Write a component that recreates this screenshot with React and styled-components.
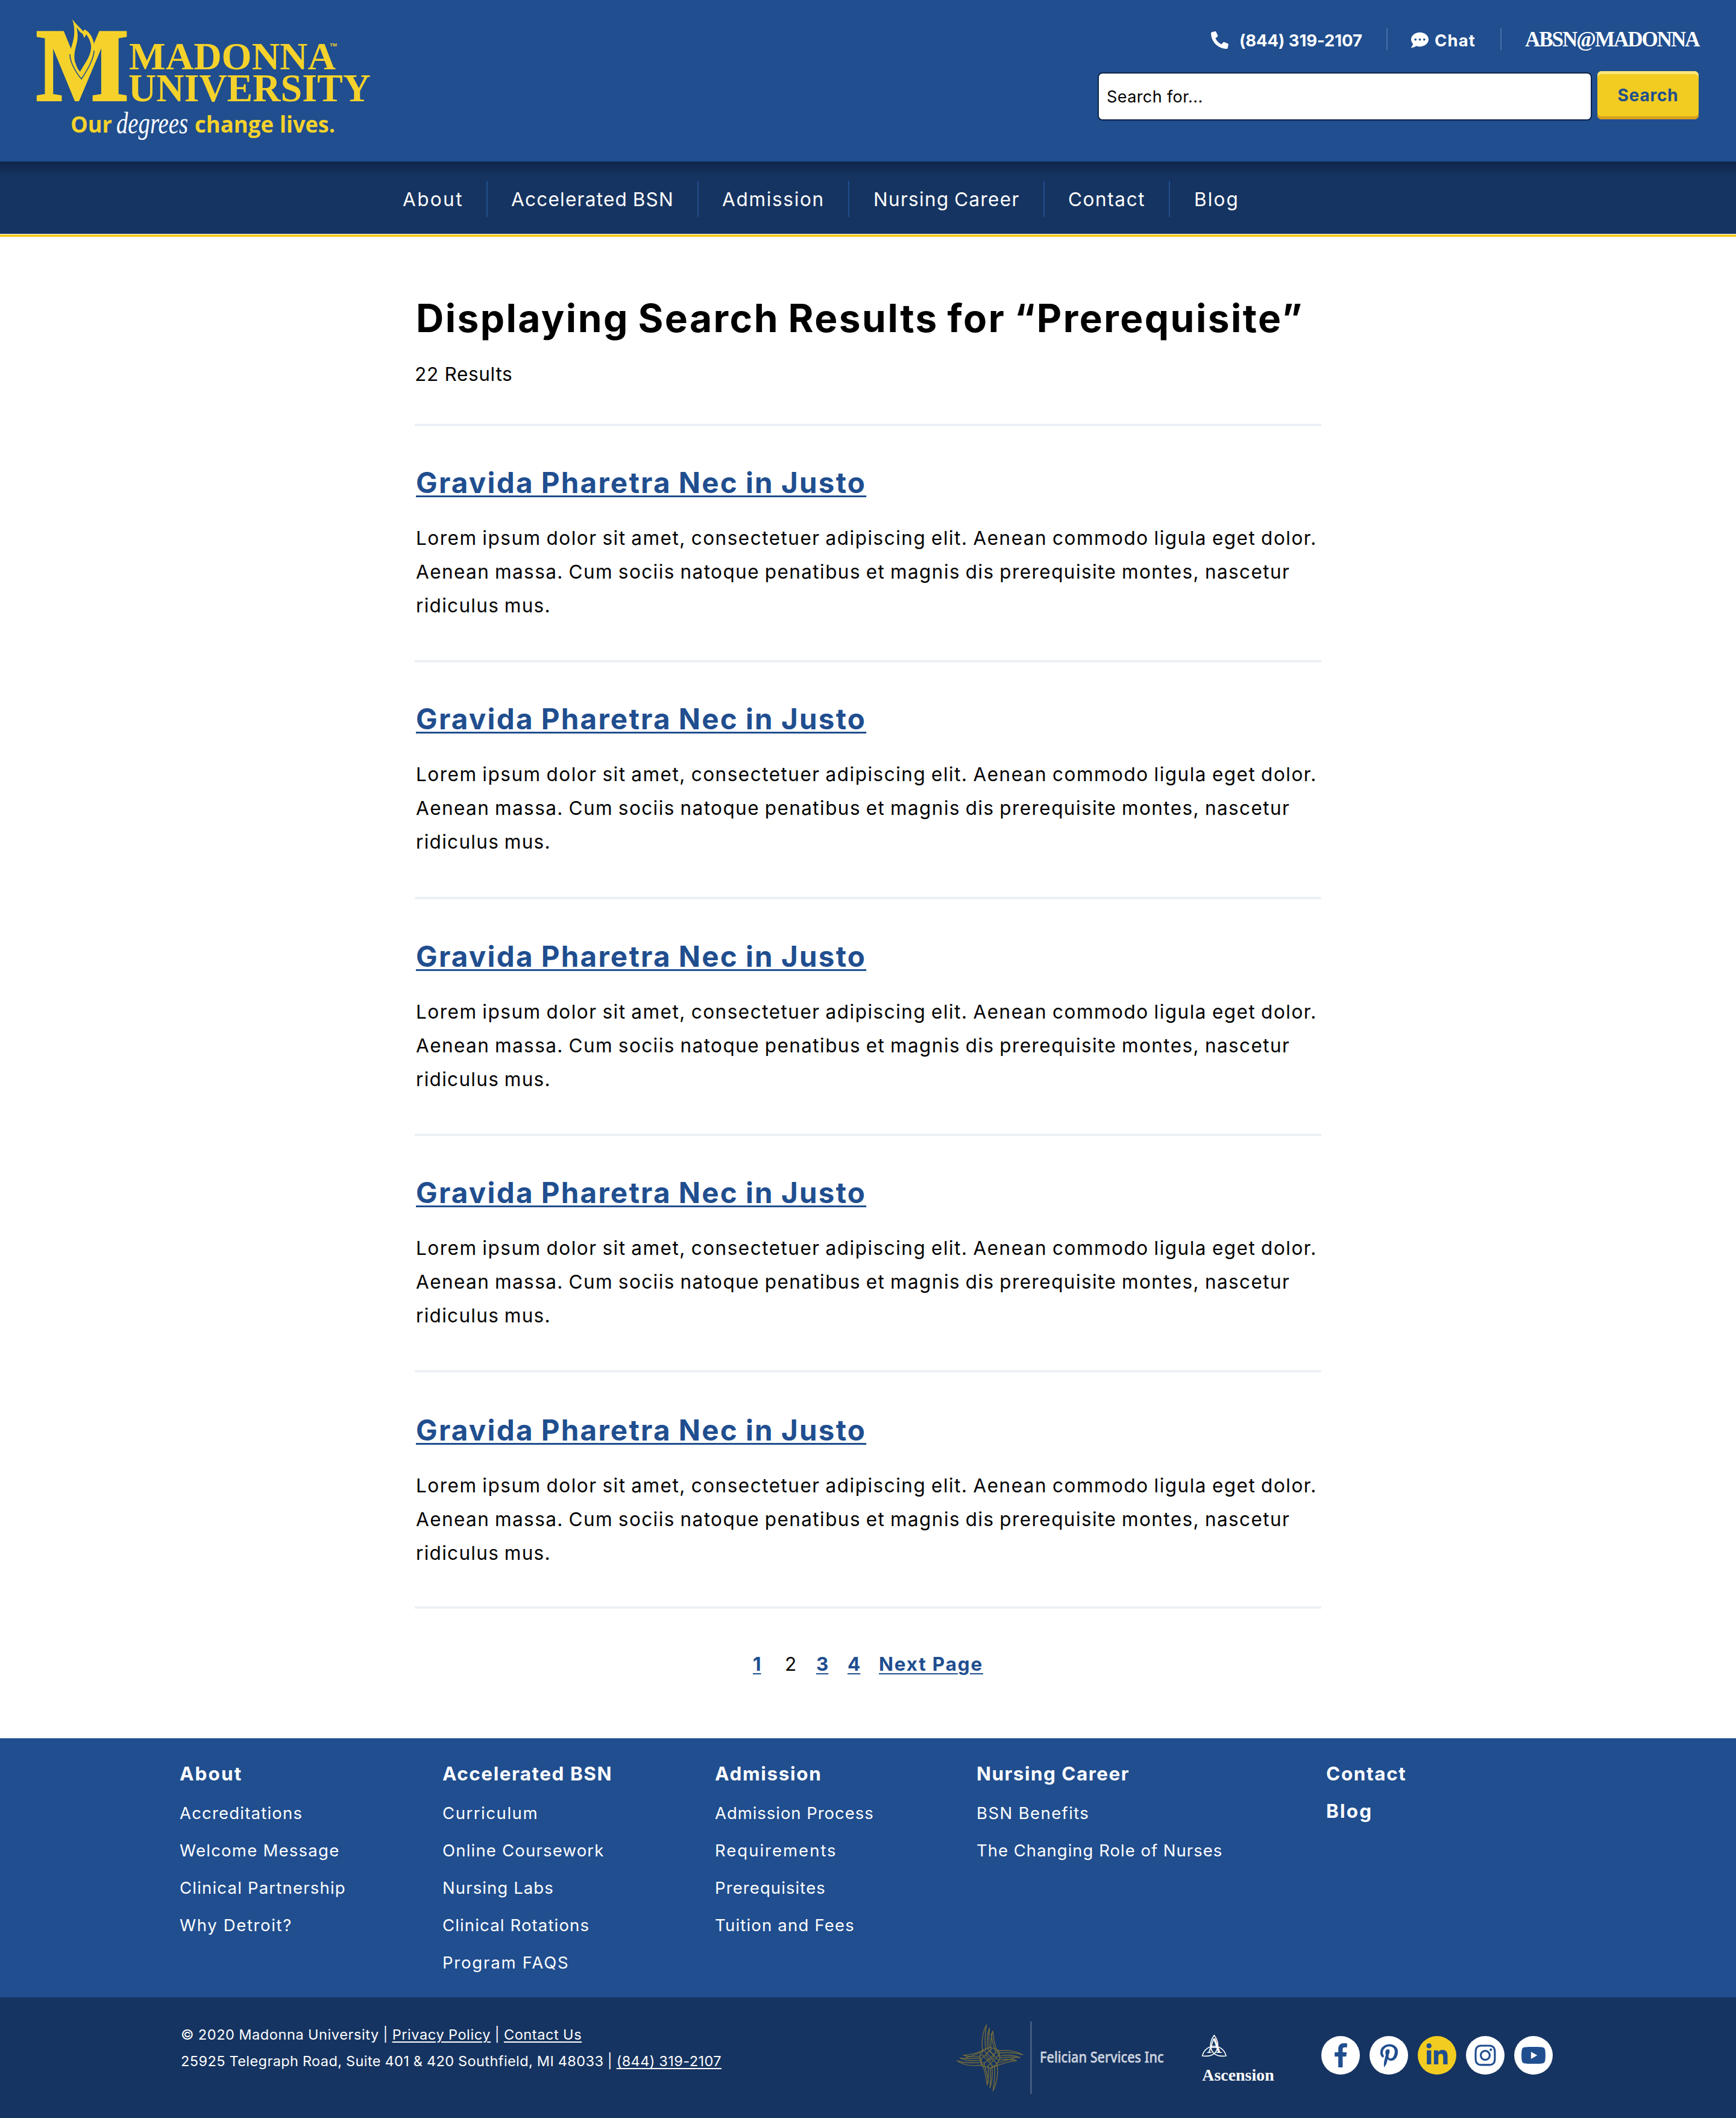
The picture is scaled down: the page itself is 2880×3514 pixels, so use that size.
import React from "react";
import styled, { createGlobalStyle, css } from "styled-components";
import {
  FaCommentDots,
  FaInstagram,
  FaLinkedinIn,
  FaPhoneAlt,
  FaPinterestP,
  FaYoutube,
} from "react-icons/fa";

const color = {
  blue: "#204e8f",
  navy: "#163461",
  shadow: "#0d2549",
  yellow: "#f2cc20",
  logo: "#f5d22b",
  rule: "#edf1f6",
};

const GlobalStyle = createGlobalStyle`
  *, *::before, *::after { box-sizing: border-box; }
  body {
    margin: 0;
    background: #fff;
    color: #000;
    font-family: Inter, "Open Sans", sans-serif;
    font-kerning: normal;
  }
  a { color: inherit; text-decoration: none; }
  h1, h2, p, ul { margin: 0; padding: 0; }
  svg { flex-shrink: 0; overflow: visible; }
`;

const Page = styled.div`
  width: 2880px;
  display: flex;
  flex-direction: column;
`;

/* Header */

const Header = styled.header`
  height: 268px;
  background: ${color.blue};
  display: flex;
  justify-content: space-between;
  align-items: flex-start;
  padding: 28px 62px 0 50px;
`;

const HeaderTools = styled.div`
  width: 997px;
  padding-top: 19px;
`;

const Utility = styled.div`
  height: 36px;
  display: flex;
  justify-content: flex-end;
  align-items: center;
  gap: 39px;
  color: #fff;
`;

const UtilityLink = styled.a`
  width: ${(p) => p.$width}px;
  display: flex;
  align-items: center;
  gap: ${(p) => p.$gap || 0}px;
  padding-top: 3px;
  font-size: 27.5px;
  font-weight: 700;
  white-space: nowrap;
  letter-spacing: ${(p) => p.$track || 0}px;
`;

const Wordmark = styled(UtilityLink)`
  padding-top: 2px;
  font-family: "Liberation Serif", serif;
  font-size: 35px;
  font-weight: 700;
`;

const UtilityRule = styled.span`
  width: 2px;
  height: 36px;
  background: #4a6fa8;
`;

const SearchForm = styled.form`
  display: flex;
  align-items: flex-start;
  justify-content: space-between;
  margin-top: 35px;
`;

const SearchInput = styled.input`
  width: 820px;
  height: 80px;
  margin: 2px 0 0;
  padding: 0 0 0 13px;
  border: 2px solid ${color.shadow};
  border-radius: 8px;
  background: #fff;
  font-family: inherit;
  font-size: 27px;
  letter-spacing: 0.4px;
  color: #000;
  &::placeholder { color: #000; opacity: 1; }
`;

const SearchButton = styled.button`
  width: 168px;
  height: 80px;
  padding: 0;
  border: 0;
  border-radius: 7px;
  background: ${color.yellow};
  box-shadow: inset 0 5px 0 #fbe67c, inset 0 -5px 0 #d8a11b;
  font-family: inherit;
  font-size: 28px;
  font-weight: 700;
  letter-spacing: 0.8px;
  color: ${color.blue};
`;

/* Navigation */

const Nav = styled.nav`
  height: 120px;
  padding: 32px 0 0 667px;
  display: flex;
  align-items: flex-start;
  background: linear-gradient(${color.shadow} 0, ${color.navy} 24px);
`;

const NavLink = styled.a`
  width: ${(p) => p.$width}px;
  height: 60px;
  padding-left: ${(p) => p.$inset}px;
  border-right: ${(p) => (p.$last ? "0" : `2px solid ${color.blue}`)};
  color: #fff;
  font-size: 31.5px;
  line-height: 61px;
  white-space: nowrap;
  word-spacing: -1.5px;
  letter-spacing: ${(p) => p.$track}px;
`;

const Stripe = styled.div`
  height: 5px;
  border-top: 1px solid #fff;
  background: ${color.yellow};
`;

/* Results */

const Main = styled.main`
  width: 1504px;
  margin: 0 auto;
  padding: 97px 0 103px;
`;

const Heading = styled.h1`
  padding-left: 2px;
  font-size: 64px;
  line-height: 76px;
  font-weight: 700;
  white-space: nowrap;
  word-spacing: -3px;
  letter-spacing: 2.45px;
`;

const Count = styled.p`
  margin: 35px 0 62px;
  font-size: 31.5px;
  line-height: 40px;
  letter-spacing: 0.7px;
`;

const Result = styled.article`
  height: ${(p) => p.$height}px;
  padding: ${(p) => p.$top}px 0 0 2px;
  border-top: 4px solid ${color.rule};
`;

const ResultTitle = styled.h2`
  font-size: 47.5px;
  line-height: 60px;
  font-weight: 700;
  letter-spacing: 2.25px;
  word-spacing: -1.5px;
  color: ${color.blue};
  a {
    text-decoration: underline;
    text-decoration-thickness: 3px;
    text-underline-offset: 4px;
  }
`;

const Excerpt = styled.p`
  margin-top: 34px;
  font-size: 31.5px;
  line-height: 56px;
  word-spacing: -1.5px;
`;

const Line = styled.span`
  display: block;
  white-space: nowrap;
  letter-spacing: ${(p) => p.$track}px;
`;

const Pagination = styled.nav`
  height: 116px;
  padding: 72px 0 0 561px;
  border-top: 4px solid ${color.rule};
  display: flex;
  font-size: 31.5px;
  line-height: 40px;
`;

const PageLink = styled.a`
  width: ${(p) => p.$width}px;
  white-space: nowrap;
  letter-spacing: ${(p) => p.$track || 0}px;
  ${(p) =>
    !p.$current &&
    css`
      font-weight: 700;
      color: ${color.blue};
      text-decoration: underline;
      text-decoration-thickness: 2px;
      text-underline-offset: 4px;
    `}
`;

/* Footer */

const FooterNav = styled.div`
  height: 430px;
  padding: 39px 0 0 298px;
  display: grid;
  grid-template-columns: 436px 452px 434px 580px 1fr;
  background: ${color.blue};
  color: #fff;
`;

const FooterHeading = styled.a`
  display: block;
  margin-bottom: ${(p) => (p.$solo ? 22 : 14)}px;
  font-size: 31.5px;
  line-height: 40px;
  font-weight: 700;
  letter-spacing: ${(p) => p.$track}px;
`;

const FooterLink = styled.a`
  display: block;
  font-size: 27.5px;
  line-height: 62px;
  white-space: nowrap;
  letter-spacing: ${(p) => p.$track}px;
`;

const Bottom = styled.div`
  height: 200px;
  padding-left: 300px;
  display: flex;
  align-items: flex-start;
  background: ${color.navy};
  color: #fff;
`;

const Legal = styled.div`
  width: 1280px;
  padding-top: 40px;
  font-size: 23.5px;
  line-height: 44px;
  word-spacing: -0.5px;
  a {
    text-decoration: underline;
    text-decoration-thickness: 2px;
    text-underline-offset: 3px;
  }
`;

const Felician = styled.svg`
  margin: 36px 55px 0 0;
`;

const Ascension = styled.svg`
  margin: 58px 74px 0 0;
`;

const Social = styled.div`
  display: flex;
  gap: 16px;
  padding-top: 64px;
`;

const SocialLink = styled.a`
  width: 64px;
  height: 64px;
  border-radius: 50%;
  display: flex;
  align-items: center;
  justify-content: center;
  background: ${(p) => (p.$active ? color.yellow : "#fff")};
  color: ${color.blue};
`;

const Logo = () => (
  <svg width="570" height="212" viewBox="50 28 570 212" fill={color.logo}>
    <g fontFamily="'Liberation Serif', serif" fontWeight="700">
      <text x="60" y="166" fontSize="171" textLength="153" lengthAdjust="spacingAndGlyphs" stroke={color.logo} strokeWidth="4">M</text>
      <text x="214" y="115" fontSize="64" textLength="343" lengthAdjust="spacingAndGlyphs">MADONNA</text>
      <text x="213" y="168" fontSize="65" textLength="402" lengthAdjust="spacingAndGlyphs">UNIVERSITY</text>
    </g>
    <text x="547" y="77" fontSize="8" fontWeight="700" fontFamily="'Liberation Sans', sans-serif" textLength="12" lengthAdjust="spacingAndGlyphs">TM</text>
    <path d="M120 32C125 48 124 61 119 76C115 88 117 98 121 108C125 118 129 124 135 132C141 122 147 113 151 103C156 92 158 80 155 69C152 58 146 51 140 49L138 52C132 45 126 40 120 32Z" />
    <path
      fill="none"
      stroke={color.blue}
      strokeWidth="1.6"
      d="M116 90C116 98 118 103 121 109C125 118 129 124 135 131C141 122 147 113 151 103C154 96 156 90 156 84"
    />
    <path
      fill={color.blue}
      d="M127 45C130 58 129 67 126 77C123 88 122 98 126 107C128 113 130 116 133 119C136 113 140 107 143 102C148 94 152 84 151 75C150 68 147 62 143 57L140 63L137 56C133 54 130 50 127 45Z"
    />
    <g fontFamily="'Open Sans', sans-serif" fontWeight="700" fontSize="38">
      <text x="117" y="220" textLength="69" lengthAdjust="spacingAndGlyphs">Our</text>
      <text x="323" y="220" textLength="131" lengthAdjust="spacingAndGlyphs">change</text>
      <text x="464" y="220" textLength="92" lengthAdjust="spacingAndGlyphs">lives.</text>
    </g>
    <text
      x="193"
      y="221"
      fill="#fff"
      fontFamily="'Liberation Serif', serif"
      fontStyle="italic"
      fontSize="50"
      textLength="119"
      lengthAdjust="spacingAndGlyphs"
    >
      degrees
    </text>
  </svg>
);

const FelicianLogo = () => (
  <Felician width="355" height="130" viewBox="30 30 1065 390">
    <g fill="none" stroke="#94802f" strokeWidth="4.2" opacity="0.74">
      <path d="M200 57C180 95 174 140 180 190M200 57C192 100 190 140 196 186M215 73C200 110 202 150 206 180M215 73C210 120 211 150 214 178M231 87C222 120 220 150 222 180M231 87C234 130 240 165 262 215M222 100C228 140 236 170 248 200" />
      <path d="M232 388C252 345 260 300 252 255M232 388C240 340 244 300 238 258M217 374C230 330 230 290 226 262M217 374C220 330 220 300 218 270M203 360C212 320 210 290 208 262M203 360C198 310 188 270 170 230M210 345C204 305 196 275 186 245" />
      <path d="M52 237C90 262 130 266 180 258M52 237C95 250 135 250 182 244M66 223C100 238 140 240 176 232M66 223C110 228 140 228 172 222M82 209C115 220 150 218 176 212M82 209C130 210 170 190 215 170M95 222C135 212 160 200 190 188" />
      <path d="M382 208C340 184 300 182 250 190M382 208C340 194 300 194 256 200M368 222C330 206 290 208 262 214M368 222C330 216 290 220 264 222M350 237C320 226 290 230 262 232M350 237C310 238 270 255 218 274M340 224C300 234 270 242 246 252" />
      <path d="M180 184L218 170L262 186M164 216L182 184M164 216L176 262L218 274L266 256M262 186L266 230L240 268M190 188L250 250M206 180L262 236M176 204L234 268M248 194L186 252M226 178L170 232M262 208L204 266M196 206L216 186L240 212L216 238Z" />
    </g>
    <rect x="417" y="42" width="9" height="360" fill="#425a82" />
    <text x="465" y="246" fontSize="75" fontWeight="500" fontFamily="'Noto Sans', sans-serif" fill="#ccd3df" stroke="#ccd3df" strokeWidth="1.5" textLength="617" lengthAdjust="spacingAndGlyphs">
      Felician Services Inc
    </text>
  </Felician>
);

const AscensionLogo = () => (
  <Ascension width="128" height="86" viewBox="30 36 384 258" fill="#fff">
    <g fill="none" stroke="#fff" strokeWidth="5" strokeLinejoin="round" strokeLinecap="round">
      <path d="M103 50C137 92 126 164 44 153C60 88 146 88 162 153C80 164 69 92 103 50Z" />
    </g>
    <g fontFamily="'Liberation Serif', serif">
      <text x="66" y="139" fontSize="106" textLength="76" lengthAdjust="spacingAndGlyphs">A</text>
      <text x="43" y="275" fontSize="79" fontWeight="700" textLength="358" lengthAdjust="spacingAndGlyphs">Ascension</text>
    </g>
  </Ascension>
);

const FacebookIcon = () => (
  <svg width="21" height="40" viewBox="0 0 264 512" fill="currentColor">
    <path d="M76.7 512V283H0v-91h76.7v-71.7C76.7 42.4 124.3 0 193.8 0c33.3 0 61.9 2.5 70.2 3.6V85h-48.2c-37.8 0-45.1 18-45.1 44.3V192H256l-11.7 91h-73.6v229" />
  </svg>
);

const navItems = [
  { label: "About", width: 142, inset: 1, track: 2.4 },
  { label: "Accelerated BSN", width: 350, inset: 39, track: 1.25 },
  { label: "Admission", width: 250, inset: 39, track: 1.7 },
  { label: "Nursing Career", width: 324, inset: 40, track: 1.3 },
  { label: "Contact", width: 208, inset: 39, track: 1.6 },
  { label: "Blog", width: 160, inset: 40, track: 2.1 },
];

const excerpt = [
  ["Lorem ipsum dolor sit amet, consectetuer adipiscing elit. Aenean commodo ligula eget dolor.", 1.5],
  ["Aenean massa. Cum sociis natoque penatibus et magnis dis prerequisite montes, nascetur", 1.42],
  ["ridiculus mus.", 1.3],
];

const results = [
  { height: 392, top: 64 },
  { height: 393, top: 64 },
  { height: 393, top: 65 },
  { height: 392, top: 64 },
  { height: 392, top: 66 },
];

const footerColumns = [
  [["About", 2.1], ["Accreditations", 1.2], ["Welcome Message", 1.25], ["Clinical Partnership", 1.2], ["Why Detroit?", 1.65]],
  [["Accelerated BSN", 1.5], ["Curriculum", 1.55], ["Online Coursework", 1.2], ["Nursing Labs", 1.1], ["Clinical Rotations", 1.15], ["Program FAQS", 1.8]],
  [["Admission", 1.65], ["Admission Process", 0.95], ["Requirements", 2], ["Prerequisites", 1.1], ["Tuition and Fees", 1.2]],
  [["Nursing Career", 1.45], ["BSN Benefits", 1.4], ["The Changing Role of Nurses", 1]],
];

export default function App() {
  return (
    <Page>
      <GlobalStyle />
      <Header>
        <Logo />
        <HeaderTools>
          <Utility>
            <UtilityLink $width={252} $gap={18} $track={-0.1}>
              <FaPhoneAlt size={29} />
              (844) 319-2107
            </UtilityLink>
            <UtilityRule />
            <UtilityLink $width={109} $gap={10} $track={1.1}>
              <FaCommentDots size={29} />
              Chat
            </UtilityLink>
            <UtilityRule />
            <Wordmark $width={288} $track={-2}>ABSN@MADONNA</Wordmark>
          </Utility>
          <SearchForm>
            <SearchInput placeholder="Search for..." />
            <SearchButton type="button">Search</SearchButton>
          </SearchForm>
        </HeaderTools>
      </Header>
      <Nav>
        {navItems.map((n, i) => (
          <NavLink key={n.label} $width={n.width} $inset={n.inset} $track={n.track} $last={i === navItems.length - 1}>
            {n.label}
          </NavLink>
        ))}
      </Nav>
      <Stripe />
      <Main>
        <Heading>Displaying Search Results for “Prerequisite”</Heading>
        <Count>22 Results</Count>
        {results.map(({ height, top }, i) => (
          <Result key={i} $height={height} $top={top}>
            <ResultTitle>
              <a>Gravida Pharetra Nec in Justo</a>
            </ResultTitle>
            <Excerpt>
              {excerpt.map(([text, track]) => (
                <Line key={text} $track={track}>{text}</Line>
              ))}
            </Excerpt>
          </Result>
        ))}
        <Pagination>
          <PageLink $width={53}>1</PageLink>
          <PageLink $width={52} $current>2</PageLink>
          <PageLink $width={52}>3</PageLink>
          <PageLink $width={52}>4</PageLink>
          <PageLink $width={180} $track={1.8}>Next Page</PageLink>
        </Pagination>
      </Main>
      <footer>
        <FooterNav>
          {footerColumns.map(([[title, titleTrack], ...links]) => (
            <div key={title}>
              <FooterHeading $track={titleTrack}>{title}</FooterHeading>
              {links.map(([label, track]) => (
                <FooterLink key={label} $track={track}>{label}</FooterLink>
              ))}
            </div>
          ))}
          <div>
            <FooterHeading $solo $track={1.6}>Contact</FooterHeading>
            <FooterHeading $solo $track={2.2}>Blog</FooterHeading>
          </div>
        </FooterNav>
        <Bottom>
          <Legal>
            <Line $track={0.6}>
              © 2020 Madonna University | <a>Privacy Policy</a> | <a>Contact Us</a>
            </Line>
            <Line $track={0.42}>
              25925 Telegraph Road, Suite 401 &amp; 420 Southfield, MI 48033 | <a>(844) 319-2107</a>
            </Line>
          </Legal>
          <FelicianLogo />
          <AscensionLogo />
          <Social>
            <SocialLink><FacebookIcon /></SocialLink>
            <SocialLink><FaPinterestP size={39} /></SocialLink>
            <SocialLink $active><FaLinkedinIn size={40} /></SocialLink>
            <SocialLink><FaInstagram size={40} /></SocialLink>
            <SocialLink><FaYoutube size={42} /></SocialLink>
          </Social>
        </Bottom>
      </footer>
    </Page>
  );
}
